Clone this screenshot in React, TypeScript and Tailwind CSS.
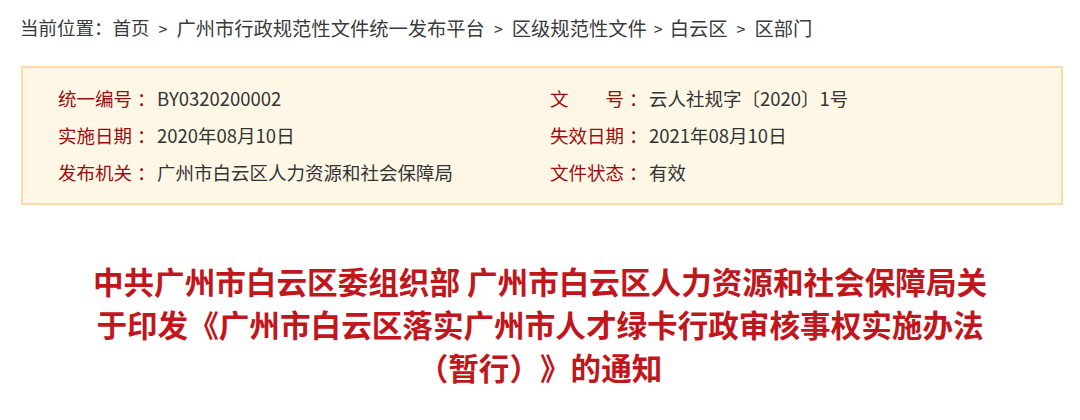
const FONT = { fontFamily: '"Microsoft YaHei", "Noto Sans CJK SC", "Noto Sans", sans-serif' };

// separator spacing differs a little between crumbs in the original
const CRUMBS = [
  { text: "广州市行政规范性文件统一发布平台", sep: "mx-[9px]" },
  { text: "区级规范性文件", sep: "mx-[9px]" },
  { text: "白云区", sep: "mx-[7px]" },
  { text: "区部门", sep: "mx-[9px]" },
];

const INFO = [
  { label: "统一编号", value: "BY0320200002" },
  { label: "文号", value: "云人社规字〔2020〕1号", spread: true },
  { label: "实施日期", value: "2020年08月10日" },
  { label: "失效日期", value: "2021年08月10日" },
  { label: "发布机关", value: "广州市白云区人力资源和社会保障局" },
  { label: "文件状态", value: "有效" },
];

const InfoItem = ({ label, value, spread }: { label: string; value: string; spread?: boolean }) => (
  <div className="flex items-center h-[37px] whitespace-nowrap">
    {spread ? (
      <span className="flex shrink-0 justify-between w-[74px] text-[#9b0c0c]">
        <span>文</span>
        <span>号</span>
      </span>
    ) : (
      <span className="shrink-0 w-[74px] text-[#9b0c0c]">{label}</span>
    )}
    <span className="shrink-0 w-[25px] pl-[5px] text-[#9b0c0c]">：</span>
    <span className="text-[#333333]">{value}</span>
  </div>
);

export default function App() {
  return (
    <div
      className="w-[1080px] h-[420px] bg-white overflow-hidden [text-spacing-trim:space-all]"
      style={FONT}
    >
      <div className="flex items-center h-[56px] pl-[20px] text-[19.3px] text-[#3a3a3a] whitespace-nowrap">
        <span className="text-[18.5px]">当前位置：首页</span>
        {CRUMBS.map((c) => (
          <span key={c.text} className="flex items-center">
            <span className={`${c.sep} text-[16px]`}>&gt;</span>
            <span>{c.text}</span>
          </span>
        ))}
      </div>

      <div className="ml-[21px] mt-[10px] w-[1042px] h-[139px] border-2 border-[#fcdba6] bg-[#fef7e6] pl-[35px] py-[12px] text-[18.5px]">
        <div className="grid grid-cols-[492px_1fr]">
          {INFO.map((it) => (
            <InfoItem key={it.label} {...it} />
          ))}
        </div>
      </div>

      <div className="mt-[55px] text-center text-[30.6px] leading-[43px] font-semibold text-[#c0161c]">
        <div>中共广州市白云区委组织部 广州市白云区人力资源和社会保障局关</div>
        <div>于印发《广州市白云区落实广州市人才绿卡行政审核事权实施办法</div>
        <div>（暂行）》的通知</div>
      </div>
    </div>
  );
}
